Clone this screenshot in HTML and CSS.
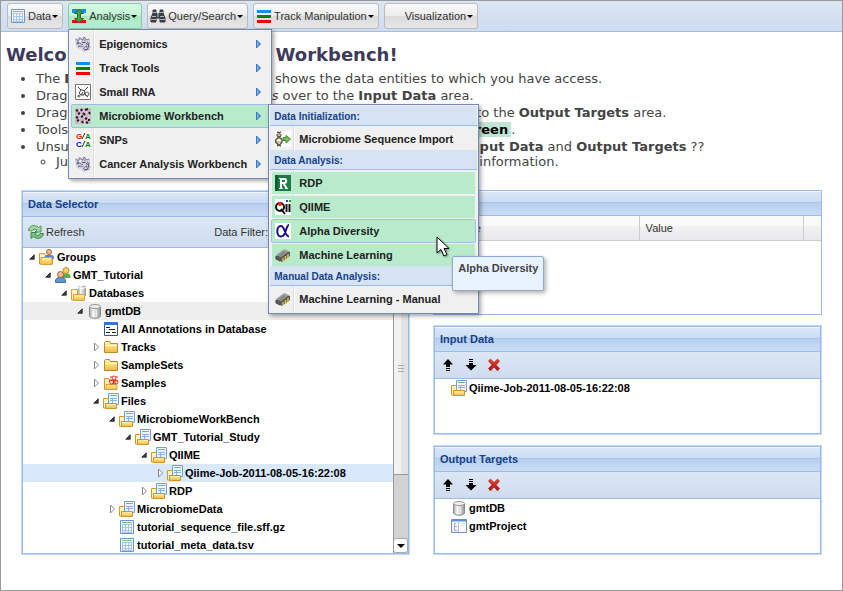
FILE: index.html
```html
<!DOCTYPE html>
<html lang="en">
<head>
<meta charset="utf-8">
<title>Genboree Workbench</title>
<link rel="stylesheet" href="styles.css">
</head>
<body>
<svg class="sprite" aria-hidden="true">
  <defs>
    <linearGradient id="gold" x1="0" y1="0" x2="0" y2="1"><stop offset="0" stop-color="#fff6b8"/><stop offset="1" stop-color="#f2b93a"/></linearGradient>
    <linearGradient id="steel" x1="0" y1="0" x2="1" y2="0"><stop offset="0" stop-color="#aaa"/><stop offset=".35" stop-color="#f8f8f8"/><stop offset="1" stop-color="#999"/></linearGradient>
    <linearGradient id="sky" x1="0" y1="0" x2="1" y2="0"><stop offset="0" stop-color="#9fd0ff"/><stop offset="1" stop-color="#1f6fd0"/></linearGradient>
    <linearGradient id="ruby" x1="0" y1="0" x2="0" y2="1"><stop offset="0" stop-color="#e0483c"/><stop offset="1" stop-color="#a81010"/></linearGradient>
  </defs>
  <symbol id="i-sheet" viewBox="0 0 16 16">
    <path d="M1.500 1.500h13v13h-13z" fill="#f3f8ff" stroke="#6b97d0"/>
    <path d="M3 3.500h10" stroke="#7fbf7a"/>
    <path d="M3 5.500h10M3 8.500h10M3 11.500h10M3.500 5v8M6.500 5v8M9.500 5v8M12.500 5v8M3 13.500h10" stroke="#a9c3e6" fill="none"/>
  </symbol>
  <symbol id="i-analysis" viewBox="0 0 16 16">
    <path d="M1 1h14v4H1z" fill="#1090ff"/><path d="M1 12h14v3H1z" fill="#f00"/>
    <path d="M8 1.500l4.500 4h-3v5h3l-4.500 4-4.500-4h3v-5h-3z" fill="#4f9e3c" stroke="#2d6b22"/>
  </symbol>
  <symbol id="i-bino" viewBox="0 0 16 16">
    <path d="M3 2h3v3l1 1h2l1-1V2h3v3l2 5v4h-5v-4H6v4H1v-4l2-5z" fill="#3a3f45" stroke="#3a3f45"/>
    <path d="M3 4.500h3M10 4.500h3M2 8.500h4M10 8.500h4M1 11.500h5M10 11.500h5" stroke="#aeb6bd"/><path d="M7 6h2v3H7z" fill="#7b838a"/>
  </symbol>
  <symbol id="i-tracks" viewBox="0 0 16 16"><path d="M1 2h14v3H1z" fill="#1090ff"/><path d="M1 7h14v3H1z" fill="#078407"/><path d="M1 12h14v3H1z" fill="#f00"/></symbol>
  <symbol id="i-genome" viewBox="0 0 16 16">
    <path d="M0 4l3-2 3 1 3-3 2 3 4 1v5l1 3-3 3-4 1-4-3-3-1-1-3z" fill="#cfcfe0"/>
    <path d="M.500 3l3 2 1-3 3 2 2-3 2 3 3-1M1 8l4-1 2 2 3-3 2 2 3-1M3 11l3-1 2 3 3-3 3 2" stroke="#717ba3" fill="none"/>
    <path d="M5 1l-1 3M8 1l1 3 4 2-2 5 3 3M3 9l3 2 3-1" stroke="#b0868f" fill="none"/><path d="M2 6l2 1M7 6l3 1M9 14l4-1M13 8l1 3" stroke="#41486f"/><path d="M4 5h2M8 8h2M6 12h2M11 5h1" stroke="#fff"/>
  </symbol>
  <symbol id="i-rna" viewBox="0 0 16 16">
    <path d="M.500.500h15v15H.500z" fill="#fafafa" stroke="#777"/>
    <path d="M3 3l3 3-2 3 2 2h3l1-3-2-2H6M9 7l4-4M10 10l3 3M4 11l-1 2M8 8l-2 3" stroke="#444" fill="none"/>
    <circle cx="12" cy="10" r="2" fill="none" stroke="#666"/><circle cx="4" cy="12" r="1" fill="none" stroke="#666"/>
  </symbol>
  <symbol id="i-microbe" viewBox="0 0 16 16">
    <path d="M0 0h16v16H0z" fill="#cbb9c4"/>
    <path d="M1 2l2 1M6 1l1 2M10 2l3-1M14 4l1 2M3 6l2-1M8 5l2 2M1 9l2 1M6 9l2-1M10 11l2-1M14 11v2M2 13l2-1M7 13l1 2M11 14l2 1" stroke="#35132c" stroke-width="2"/>
    <path d="M4 2h1M8 3h1M11 4h1M5 7h1M9 9h1M13 9h1M4 14h1M9 14h1" stroke="#fff"/>
  </symbol>
  <symbol id="i-import" viewBox="0 0 16 16">
    <path d="M0 0h16v16H0z" fill="#fff"/>
    <path d="M2 1c5 2 5 4 1 6s-3 5 3 8M6 1C1 3 1 5 5 7s2 6-3 8" stroke="#5b5c45" fill="none" stroke-width="1.500"/><path d="M2 4h4M2 11h4" stroke="#c9853c"/>
    <path d="M8 6.500h3v-2l4.500 3.500-4.500 4v-2.500H8z" fill="#77c05c" stroke="#3d8a2a"/>
  </symbol>
  <symbol id="i-rdp" viewBox="0 0 16 16">
    <path d="M0 0h16v16H0z" fill="#1f7a45"/><path d="M0 0h3v16H0z" fill="#135b30"/>
    <path d="M6 13V4h3c3 0 3 4 0 4H6M8.500 8.500l3 4.500" fill="none" stroke="#fff" stroke-width="2"/><path d="M4 13.500h4M10 13.500h3M4 3.500h3" stroke="#dff"/>
  </symbol>
  <symbol id="i-qiime" viewBox="0 0 16 16">
    <path d="M0 0h16v16H0z" fill="#fff"/><circle cx="5" cy="8" r="4" fill="#fff" stroke="#111" stroke-width="2"/><path d="M6 10l4 5M11.500 5v8M14.500 5v8" stroke="#111" stroke-width="2"/><circle cx="5" cy="5" r="2" fill="#f22"/><path d="M11 1h2v2h-2z" fill="#33f"/><path d="M14 1h2v2h-2z" fill="#0b0"/>
  </symbol>
  <symbol id="i-alpha" viewBox="0 0 16 16"><path d="M0 0h16v16H0z" fill="#fff"/><path d="M14 2c-1.500 0-2 2-3 5-1 4-2.500 6.500-5 6.500C1 13.500 1 3 6 3c4 0 3.500 10.500 8 10.500" fill="none" stroke="#1b0f86" stroke-width="2"/></symbol>
  <symbol id="i-chip" viewBox="0 0 16 16">
    <path d="M1 9l8-6 6 2v4l-8 6-6-3z" fill="#5a5a5a"/><path d="M1 8l8-6 5 2-8 6z" fill="#a5a5a3"/><path d="M3 8l6-4 2 1-5 4z" fill="#858585"/>
    <path d="M8 11v3M10.500 9v4M13 7v4" stroke="#e7c44a" stroke-width="1.500"/><path d="M1 9v3l4 2" stroke="#444" fill="none"/>
  </symbol>
  <symbol id="i-refresh" viewBox="0 0 16 16">
    <path d="M.500 6.500C1 1.500 7 0 10.500 3.500L13 2v6H7l2-2C7 4.500 5 5 4 7z" fill="#a3d69f" stroke="#4b9a52"/>
    <path d="M15.500 9.500c-.500 5-6.500 6.500-10 3L3 14.500v-6h6l-2 2c2 1.500 4 1 5-1z" fill="#7cc07f" stroke="#3d8d45"/>
  </symbol>
  <symbol id="i-folder" viewBox="0 0 16 16">
    <path d="M1.500 13.500v-10l1-1h4l1 2h7v9z" fill="url(#gold)" stroke="#b98a2c"/><path d="M2 6.500h12" stroke="#fffbe0"/>
  </symbol>
  <symbol id="i-files" viewBox="0 0 16 16">
    <path d="M.500 15V5.500h6V15z" fill="#fff3c4" stroke="#d8962f"/><path d="M5.500.500h10v11h-10z" fill="#eef5ff" stroke="#6f9fd8"/>
    <path d="M7 2.500h7" stroke="#6fbf68"/><path d="M7 5.500h7M7 7.500h7M9.500 5v5" stroke="#8db2e0"/><path d="M2.500 15.500v-5h11v5z" fill="url(#gold)" stroke="#d8902a"/>
  </symbol>
  <symbol id="i-groups" viewBox="0 0 16 16">
    <path d="M.500 15V4.500h5l1 2h7V15z" fill="#fff3c4" stroke="#d8962f"/><path d="M5.500 8c0-3 9-3 9.500 0v2h-9.500z" fill="#4f88cc"/><circle cx="10" cy="3" r="2.500" fill="#eebb90" stroke="#a85f2a"/><path d="M2 15.500V8.500h11v7z" fill="url(#gold)" stroke="#d8a03a"/>
  </symbol>
  <symbol id="i-users" viewBox="0 0 16 16">
    <path d="M7 9c0-4 8-4 8.500 0v2H8z" fill="#58ab4e"/><circle cx="11" cy="3.500" r="3" fill="#f3d06b" stroke="#c08f2a"/>
    <path d="M.500 14c0-5 10-5 10 0v1.500H.500z" fill="#5f97dd" stroke="#3a6db5"/><circle cx="5.500" cy="7.500" r="3" fill="#f0bd95" stroke="#a5612f"/>
  </symbol>
  <symbol id="i-dbfolder" viewBox="0 0 16 16">
    <path d="M.500 15V4.500h6V15z" fill="#fff3c4" stroke="#d8a03a"/><path d="M7 2c0-2 8-2 8 0v9H7z" fill="url(#steel)"/><path d="M7 2c2 2 6 2 8 0" stroke="#fff" fill="none"/><path d="M2.500 15.500V9.500h11v6z" fill="url(#gold)" stroke="#d8a03a"/>
  </symbol>
  <symbol id="i-db" viewBox="0 0 16 16">
    <path d="M2.500 4v9c1 3 10 3 11 0V4" fill="url(#steel)" stroke="#888"/><ellipse cx="8" cy="3.500" rx="5.500" ry="2" fill="#eee" stroke="#999"/><path d="M6.500 7v7M9.500 7v7" stroke="#fff" opacity=".6"/>
  </symbol>
  <symbol id="i-annot" viewBox="0 0 16 16">
    <path d="M1.500 1.500h13v13h-13z" fill="#fff" stroke="#35528a"/><path d="M1 2.500h14" stroke="#3c73cc" stroke-width="3"/><path d="M3 6.500h4M6 8.500h6M3 11.500h4M9 11.500h4" stroke="#222"/>
  </symbol>
  <symbol id="i-samples" viewBox="0 0 16 16">
    <path d="M1.500 14.500v-11h4l1 2h6v9z" fill="#fff0bb" stroke="#d8962f"/><path d="M3 14.500V9.500h11v5z" fill="url(#gold)" stroke="#e0a03a"/>
    <circle cx="11" cy="3" r="2" fill="none" stroke="#f02b22"/><circle cx="8.500" cy="7" r="2" fill="none" stroke="#f02b22"/><circle cx="13" cy="7" r="2" fill="none" stroke="#f02b22"/><path d="M10.500 4v5M8 1v2M14 1v2M6 5l9 1" stroke="#f02b22"/>
  </symbol>
  <symbol id="i-project" viewBox="0 0 16 16">
    <path d="M.500 1.500h15v13H.500z" fill="#fff" stroke="#6d8fbd"/><path d="M1 2.500h14" stroke="#5a8fdc" stroke-width="2"/><path d="M1 4h6v10H1z" fill="#f4f6fa"/><path d="M7.500 4v10" stroke="#aabfdd"/><path d="M3.500 5v8M3 5.500h2M4 8.500h2M4 12.500h2" stroke="#aaa"/><path d="M9 5.500h5M9 7.500h4" stroke="#dde7f4"/>
  </symbol>
  <symbol id="i-up" viewBox="0 0 16 16"><path d="M8 2l5 5.500h-3V10H6V7.500H3zM6 11h4v1H6zM6 13h4v1H6z"/></symbol>
  <symbol id="i-down" viewBox="0 0 16 16"><path d="M8 13.500L2.500 8H6V6h4v2h3.500zM6 2h4v1H6zM6 4h4v1H6z"/></symbol>
  <symbol id="i-delete" viewBox="0 0 16 16"><path d="M2 14h12" stroke="#c5ccd8"/><path d="M2 4l2.500-2.500L8 5l3.500-3.500L14 4l-3.500 4L14 11.500 11.500 14 8 10.500 4.500 14 2 11.500 5.500 8z" fill="url(#ruby)"/></symbol>
  <symbol id="i-next" viewBox="0 0 8 10"><path d="M1.500 1v8l4-4z" fill="url(#sky)" stroke="#3476c8"/></symbol>
  <symbol id="i-opened" viewBox="0 0 8 8"><path d="M7 1v6H1z" fill="#444" stroke="#111"/></symbol>
  <symbol id="i-closed" viewBox="0 0 8 10"><path d="M1.500 1v8l4-4z" fill="#fff" stroke="#888"/></symbol>
</svg>

<nav class="bar" aria-label="Main">
  <button type="button" class="btn"><svg class="ico"><use href="#i-sheet"/></svg>Data<i class="caret"></i></button>
  <div class="drop">
    <button type="button" class="btn on" aria-expanded="true"><svg class="ico"><use href="#i-analysis"/></svg>Analysis<i class="caret"></i></button>
    <ul class="menu main-menu">
      <li class="item"><svg class="ico"><use href="#i-genome"/></svg><a href="#">Epigenomics</a><svg class="next"><use href="#i-next"/></svg></li>
      <li class="item"><svg class="ico"><use href="#i-tracks"/></svg><a href="#">Track Tools</a><svg class="next"><use href="#i-next"/></svg></li>
      <li class="item"><svg class="ico"><use href="#i-rna"/></svg><a href="#">Small RNA</a><svg class="next"><use href="#i-next"/></svg></li>
      <li class="item active"><svg class="ico"><use href="#i-microbe"/></svg><a href="#">Microbiome Workbench</a><svg class="next"><use href="#i-next"/></svg>
        <ul class="menu sub-menu">
          <li class="head">Data Initialization:</li>
          <li class="item"><svg class="ico"><use href="#i-import"/></svg><a href="#">Microbiome Sequence Import</a></li>
          <li class="head">Data Analysis:</li>
          <li class="item ready"><svg class="ico"><use href="#i-rdp"/></svg><a href="#">RDP</a></li>
          <li class="item ready"><svg class="ico"><use href="#i-qiime"/></svg><a href="#">QIIME</a></li>
          <li class="item active"><svg class="ico"><use href="#i-alpha"/></svg><a href="#">Alpha Diversity</a>
            <svg class="cursor" viewBox="0 0 14 22" aria-hidden="true"><path d="M1 1v16l4-3.500 3 6.500 3-1.500-3-6h5z" fill="#fff" stroke="#000"/></svg>
            <div class="tip" role="tooltip">Alpha Diversity</div>
          </li>
          <li class="item ready"><svg class="ico"><use href="#i-chip"/></svg><a href="#">Machine Learning</a></li>
          <li class="head">Manual Data Analysis:</li>
          <li class="item"><svg class="ico"><use href="#i-chip"/></svg><a href="#">Machine Learning - Manual</a></li>
        </ul>
      </li>
      <li class="item"><svg class="ico snp" viewBox="0 0 16 16" aria-hidden="true"><path d="M0 0h16v16H0z" fill="#fff"/><text x="1" y="7" fill="#e00">G</text><text x="10" y="7" fill="#080">A</text><text x="1" y="15" fill="#00d">C</text><text x="10" y="15" fill="#080">A</text><path d="M7 7l3-6M7 15l3-6" stroke="#222"/></svg><a href="#">SNPs</a><svg class="next"><use href="#i-next"/></svg></li>
      <li class="item"><svg class="ico"><use href="#i-genome"/></svg><a href="#">Cancer Analysis Workbench</a><svg class="next"><use href="#i-next"/></svg></li>
    </ul>
  </div>
  <button type="button" class="btn"><svg class="ico"><use href="#i-bino"/></svg>Query/Search<i class="caret"></i></button>
  <button type="button" class="btn"><svg class="ico"><use href="#i-tracks"/></svg>Track Manipulation<i class="caret"></i></button>
  <button type="button" class="btn"><span class="ico"></span>Visualization<i class="caret"></i></button>
</nav>

<section class="intro">
  <h1>Welcome to the Genboree Workbench!</h1>
  <ul>
    <li>The <b>Data Selector</b> panel in the left shows the data entities to which you have access.</li>
    <li>Drag the desired source <em>data entities</em> over to the <b>Input Data</b> area.</li>
    <li>Drag the desired databases or projects to store your output results to the <b>Output Targets</b> area.</li>
    <li>Tools you can use with the selected source data will be shown as <mark>green</mark>.</li>
    <li>Unsure which kinds of entities to drag and drop into the areas for <b>Input Data</b> and <b>Output Targets</b> ??
      <ul><li>Just pick any tool you need from the toolbar menus for its usage information.</li></ul>
    </li>
  </ul>
</section>

<main class="work">
  <section class="panel">
    <h2>Data Selector</h2>
    <div class="tools filter-tools">
      <button type="button" class="link-btn"><svg class="ico"><use href="#i-refresh"/></svg>Refresh</button>
      <label for="filter">Data Filter:</label>
      <select id="filter"><option>All</option></select>
    </div>
    <div class="scroller">
      <ul class="tree">
        <li class="row l0"><span class="tw"><svg class="opened"><use href="#i-opened"/></svg></span><svg class="ico"><use href="#i-groups"/></svg>Groups</li>
        <li class="row l1"><span class="tw"><svg class="opened"><use href="#i-opened"/></svg></span><svg class="ico"><use href="#i-users"/></svg>GMT_Tutorial</li>
        <li class="row l2"><span class="tw"><svg class="opened"><use href="#i-opened"/></svg></span><svg class="ico"><use href="#i-dbfolder"/></svg>Databases</li>
        <li class="row l3 over"><span class="tw"><svg class="opened"><use href="#i-opened"/></svg></span><svg class="ico"><use href="#i-db"/></svg>gmtDB</li>
        <li class="row l4"><span class="tw"></span><svg class="ico"><use href="#i-annot"/></svg>All Annotations in Database</li>
        <li class="row l4"><span class="tw"><svg class="closed"><use href="#i-closed"/></svg></span><svg class="ico"><use href="#i-folder"/></svg>Tracks</li>
        <li class="row l4"><span class="tw"><svg class="closed"><use href="#i-closed"/></svg></span><svg class="ico"><use href="#i-folder"/></svg>SampleSets</li>
        <li class="row l4"><span class="tw"><svg class="closed"><use href="#i-closed"/></svg></span><svg class="ico"><use href="#i-samples"/></svg>Samples</li>
        <li class="row l4"><span class="tw"><svg class="opened"><use href="#i-opened"/></svg></span><svg class="ico"><use href="#i-files"/></svg>Files</li>
        <li class="row l5"><span class="tw"><svg class="opened"><use href="#i-opened"/></svg></span><svg class="ico"><use href="#i-files"/></svg>MicrobiomeWorkBench</li>
        <li class="row l6"><span class="tw"><svg class="opened"><use href="#i-opened"/></svg></span><svg class="ico"><use href="#i-files"/></svg>GMT_Tutorial_Study</li>
        <li class="row l7"><span class="tw"><svg class="opened"><use href="#i-opened"/></svg></span><svg class="ico"><use href="#i-files"/></svg>QIIME</li>
        <li class="row l8 selected"><span class="tw"><svg class="closed"><use href="#i-closed"/></svg></span><svg class="ico"><use href="#i-files"/></svg>Qiime-Job-2011-08-05-16:22:08</li>
        <li class="row l7"><span class="tw"><svg class="closed"><use href="#i-closed"/></svg></span><svg class="ico"><use href="#i-files"/></svg>RDP</li>
        <li class="row l5"><span class="tw"><svg class="closed"><use href="#i-closed"/></svg></span><svg class="ico"><use href="#i-files"/></svg>MicrobiomeData</li>
        <li class="row l5"><span class="tw"></span><svg class="ico"><use href="#i-sheet"/></svg>tutorial_sequence_file.sff.gz</li>
        <li class="row l5"><span class="tw"></span><svg class="ico"><use href="#i-sheet"/></svg>tutorial_meta_data.tsv</li>
      </ul>
      <div class="track" aria-hidden="true"><div class="thumb"><i class="grip"></i></div><div class="rest"></div><div class="step"><i class="caret"></i></div></div>
    </div>
  </section>

  <div class="side">
    <section class="panel details">
      <h2>Details</h2>
      <table>
        <thead><tr><th class="c-name">Attribute</th><th>Value</th><th class="c-end"></th></tr></thead>
      </table>
    </section>
    <section class="panel">
      <h2>Input Data</h2>
      <div class="tools">
        <button type="button" class="tool" aria-label="Move up"><svg class="ico"><use href="#i-up"/></svg></button>
        <button type="button" class="tool" aria-label="Move down"><svg class="ico"><use href="#i-down"/></svg></button>
        <button type="button" class="tool" aria-label="Remove"><svg class="ico"><use href="#i-delete"/></svg></button>
      </div>
      <ul class="tree drop-list">
        <li class="row l0"><span class="tw"></span><svg class="ico"><use href="#i-files"/></svg>Qiime-Job-2011-08-05-16:22:08</li>
      </ul>
    </section>
    <section class="panel">
      <h2>Output Targets</h2>
      <div class="tools">
        <button type="button" class="tool" aria-label="Move up"><svg class="ico"><use href="#i-up"/></svg></button>
        <button type="button" class="tool" aria-label="Move down"><svg class="ico"><use href="#i-down"/></svg></button>
        <button type="button" class="tool" aria-label="Remove"><svg class="ico"><use href="#i-delete"/></svg></button>
      </div>
      <ul class="tree drop-list">
        <li class="row l0"><span class="tw"></span><svg class="ico"><use href="#i-db"/></svg>gmtDB</li>
        <li class="row l0"><span class="tw"></span><svg class="ico"><use href="#i-project"/></svg>gmtProject</li>
      </ul>
    </section>
  </div>
</main>
</body>
</html>
```
FILE: styles.css
```css
* { box-sizing: border-box; }

body {
  margin: 0;
  min-height: 100vh;
  border: 1px solid #999;
  background: #fff;
  color: #333;
  font: 11px/14px "Liberation Sans", Arial, sans-serif;
}

ul { list-style: none; margin: 0; padding: 0; }
button { font: inherit; color: inherit; }
.sprite { position: absolute; width: 0; height: 0; }
.ico { width: 16px; height: 16px; flex: none; }
.snp { font: bold 8px "Liberation Sans", Arial, sans-serif; }

.caret {
  width: 0;
  height: 0;
  border: 3px solid transparent;
  border-top-color: #000;
  border-bottom: 0;
}

/* top bar */
.bar {
  display: flex;
  gap: 5px;
  height: 31px;
  padding: 2px 6px;
  border-bottom: 1px solid #a3bfdf;
  background: linear-gradient(#dbe6f4, #cddcef);
}

.btn {
  display: flex;
  align-items: center;
  gap: 1px;
  height: 26px;
  padding: 0 4px 0 2px;
  border: 1px solid #bbb;
  border-radius: 3px;
  background: linear-gradient(#fafafa, #ececec 48%, #dcdcdc 52%, #e6e6e6);
  white-space: nowrap;
}
.btn .ico { margin-right: 1px; }
.btn.on {
  border-color: #8fc7a6;
  background: linear-gradient(#d3fbe1, #c2f4d4 48%, #abe9c3 52%, #b5efcb);
}

/* menus */
.drop { position: relative; z-index: 5; }
.menu {
  position: absolute;
  padding: 2px;
  border: 1px solid #718bb7;
  background: linear-gradient(90deg, transparent 24px, #dcdcdc 24px, #dcdcdc 25px, #fff 25px, #fff 26px, transparent 26px) #f0f0f0;
  box-shadow: 2px 2px 4px rgba(0, 0, 0, .35);
  color: #222;
  font-weight: bold;
}
.main-menu { top: 26px; left: 0; width: 204px; }
.sub-menu { top: -1px; left: 196px; width: 211px; z-index: 1; }

.item {
  position: relative;
  display: flex;
  align-items: center;
  height: 24px;
  padding: 0 6px 0 4px;
}
.item a { flex: 1; margin-left: 8px; color: inherit; text-decoration: none; white-space: nowrap; }
.item.ready { background: linear-gradient(#b7ebcb, #b7ebcb) 1px 1px / calc(100% - 2px) 22px no-repeat; }
.item.active { padding: 0 5px 0 3px; border: 1px solid #a3bae9; border-radius: 2px; background: #b7ebcb; }
.next { width: 8px; height: 10px; flex: none; }

.head {
  height: 20px;
  margin: -1px -1px 1px;
  padding: 4px 4px 0;
  border-bottom: 1px solid #99bbe8;
  background: #d6e3f2;
  color: #15428b;
  font-size: 10px;
}

.cursor { position: absolute; top: 16px; left: 164px; width: 14px; height: 22px; filter: drop-shadow(1px 1px 1px rgba(0, 0, 0, .4)); z-index: 3; }
.tip {
  position: absolute;
  top: 36px;
  left: 180px;
  height: 35px;
  padding: 4px 5px;
  border: 1px solid #8eaace;
  border-radius: 2px;
  background: #e9f2ff;
  box-shadow: 2px 2px 4px rgba(0, 0, 0, .3);
  color: #444;
  white-space: nowrap;
  z-index: 2;
}

/* welcome text */
.intro {
  padding: 12px 5px 0;
  color: #444;
  font: 13px/17px "DejaVu Sans", Verdana, sans-serif;
}
.intro h1 { margin: 0 0 4px; color: #3e3a5a; font-size: 18px; line-height: 22px; white-space: nowrap; }
.intro ul { list-style: disc; padding-left: 30px; white-space: nowrap; }
.intro ul ul { list-style: circle; padding-left: 20px; line-height: 14px; }
.intro mark { padding: 0 3px; background: #bfe5d4; color: #000; font-weight: bold; }

/* panels */
.work {
  display: grid;
  grid-template-columns: 1fr 1fr;
  gap: 23px;
  padding: 21px 20px 35px;
}
.side { display: flex; flex-direction: column; gap: 10px; min-width: 0; }
.panel { border: 1px solid #c3d9f5; min-width: 0; }
.panel > * { border-left: 1px solid #99bbe8; border-right: 1px solid #99bbe8; }
.panel > :last-child { border-bottom: 1px solid #99bbe8; }
.panel h2 {
  margin: 0;
  height: 26px;
  padding: 5px 5px;
  border-top: 1px solid #99bbe8;
  border-bottom: 1px solid #99bbe8;
  background: linear-gradient(#f2f7fd 1px, #dbe7f6 1px, #cbdcf3 11px, #a9c5ea 11px, #a9c5ea 12px, #b8cfee 12px, #cadcf3);
  color: #15428b;
  font-size: 11px;
  line-height: 14px;
}
.tools {
  display: flex;
  align-items: center;
  gap: 7px;
  height: 27px;
  padding: 0 5px;
  border-bottom: 1px solid #99bbe8;
  background: linear-gradient(#dce7f5, #cfdcee);
}
.filter-tools { height: 31px; }
.filter-tools label { margin-left: auto; }
.filter-tools select { width: 128px; height: 20px; font: inherit; }
.link-btn, .tool { display: flex; align-items: center; gap: 2px; padding: 0; border: 0; background: none; }

.scroller { display: flex; height: 306px; }
.tree { flex: 1; overflow: hidden; min-width: 0; color: #000; font-weight: bold; }
.row { display: flex; align-items: center; height: 18px; white-space: nowrap; }
.row .ico { margin-right: 2px; }
.row.over { background: #eee; }
.row.selected { background: #d9e8fb; }
.l1 { padding-left: 16px; }
.l2 { padding-left: 32px; }
.l3 { padding-left: 48px; }
.l4 { padding-left: 64px; }
.l5 { padding-left: 80px; }
.l6 { padding-left: 96px; }
.l7 { padding-left: 112px; }
.l8 { padding-left: 128px; }
.tw { display: flex; width: 16px; padding-left: 6px; flex: none; }
.opened { width: 6px; height: 6px; }
.closed { width: 8px; height: 10px; }
.drop-list { height: 55px; }

.track { display: flex; flex-direction: column; width: 15px; border-left: 1px solid #999; background: #d2d2d2; }
.thumb { display: flex; align-items: center; justify-content: center; height: 227px; border-bottom: 1px solid #999; background: linear-gradient(90deg, #f2f2f2 50%, #e2e2e2 50%); }
.grip { width: 6px; height: 7px; margin-top: 14px; background: repeating-linear-gradient(#aaa 0 1px, transparent 1px 3px); }
.rest { flex: 1; }
.step { display: flex; align-items: center; justify-content: center; height: 15px; border: 1px solid #aaa; border-left: 0; border-radius: 3px; background: #fff; }
.step .caret { border-width: 4px; border-bottom: 0; }

.details { border-color: #99bbe8; height: 125px; }
.details > * { border-left: 0; border-right: 0; }
.details h2 { height: 25px; padding-left: 6px; border-top: 0; }
.details > :last-child { border-bottom: 0; }
.details table { width: 100%; border-collapse: collapse; table-layout: fixed; }
.details th {
  height: 24px;
  padding: 0 6px;
  border-right: 1px solid #ccc;
  border-bottom: 1px solid #ccc;
  background: linear-gradient(#fafafa 40%, #f2f2f2 42%, #e8e9eb);
  color: #333;
  font-weight: normal;
  text-align: left;
}
.details .c-name { width: 53%; }
.details .c-end { width: 18px; border-right: 0; }
```
